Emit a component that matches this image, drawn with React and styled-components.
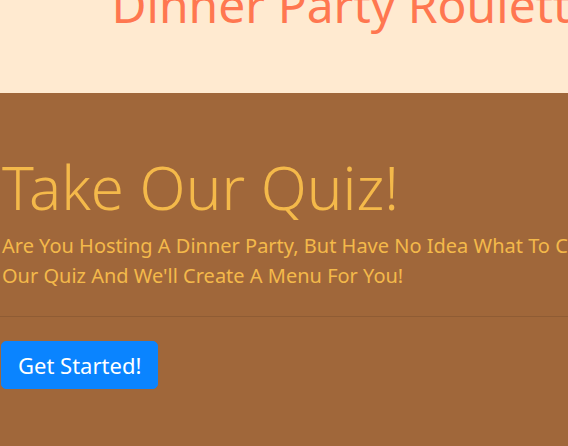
import React from 'react';
import styled, { createGlobalStyle } from 'styled-components';

const GlobalStyle = createGlobalStyle`
    html, body {
        margin:0;
        padding:0;
        overflow:hidden;
        background-color:#a0673a;
    }
    body {
        font-family:'Noto Sans', sans-serif;
    }
`;

export default function App(){
    return(
        <Page>
            <GlobalStyle/>
            <Header>
                <Title>Dinner Party Roulette</Title>
            </Header>
            <Jumbotron>
                <Display>Take Our Quiz!</Display>
                <Lead>Are You Hosting A Dinner Party, But Have No Idea What To Cook? Take Our Quiz And We'll Create A Menu For You!</Lead>
                <Rule/>
                <StartButton>Get Started!</StartButton>
            </Jumbotron>
        </Page>
    )
}

const Page = styled.div`
    width:709px;
    min-height:446px;
    background-color:#a0673a;
`;

const Header = styled.header`
    box-sizing:border-box;
    height:93px;
    background-color:#ffead0;
    overflow:hidden;
`;

const Title = styled.h1`
    margin:-23px 0 0 0;
    text-align:center;
    font-size:48px;
    font-weight:400;
    line-height:56px;
    color:#ff7750;
`;

const Jumbotron = styled.section`
    box-sizing:border-box;
    padding:58px 2px 0 2px;
    color:#f4b94a;
`;

const Display = styled.h2`
    margin:0;
    font-size:60px;
    font-weight:300;
    line-height:72px;
`;

const Lead = styled.p`
    max-width:665px;
    margin:8px 0 0 0;
    font-size:20px;
    line-height:30px;
`;

const Rule = styled.hr`
    margin:25px -2px 24px -2px;
    border:0;
    border-top:1px solid rgba(0,0,0,0.1);
`;

const StartButton = styled.button`
    display:block;
    padding:8px 16px;
    font-family:inherit;
    font-size:22px;
    line-height:30px;
    color:#ffffff;
    background-color:#0a84ff;
    border:1px solid #0a84ff;
    border-radius:5px;
    margin-left:-1px;
`;
